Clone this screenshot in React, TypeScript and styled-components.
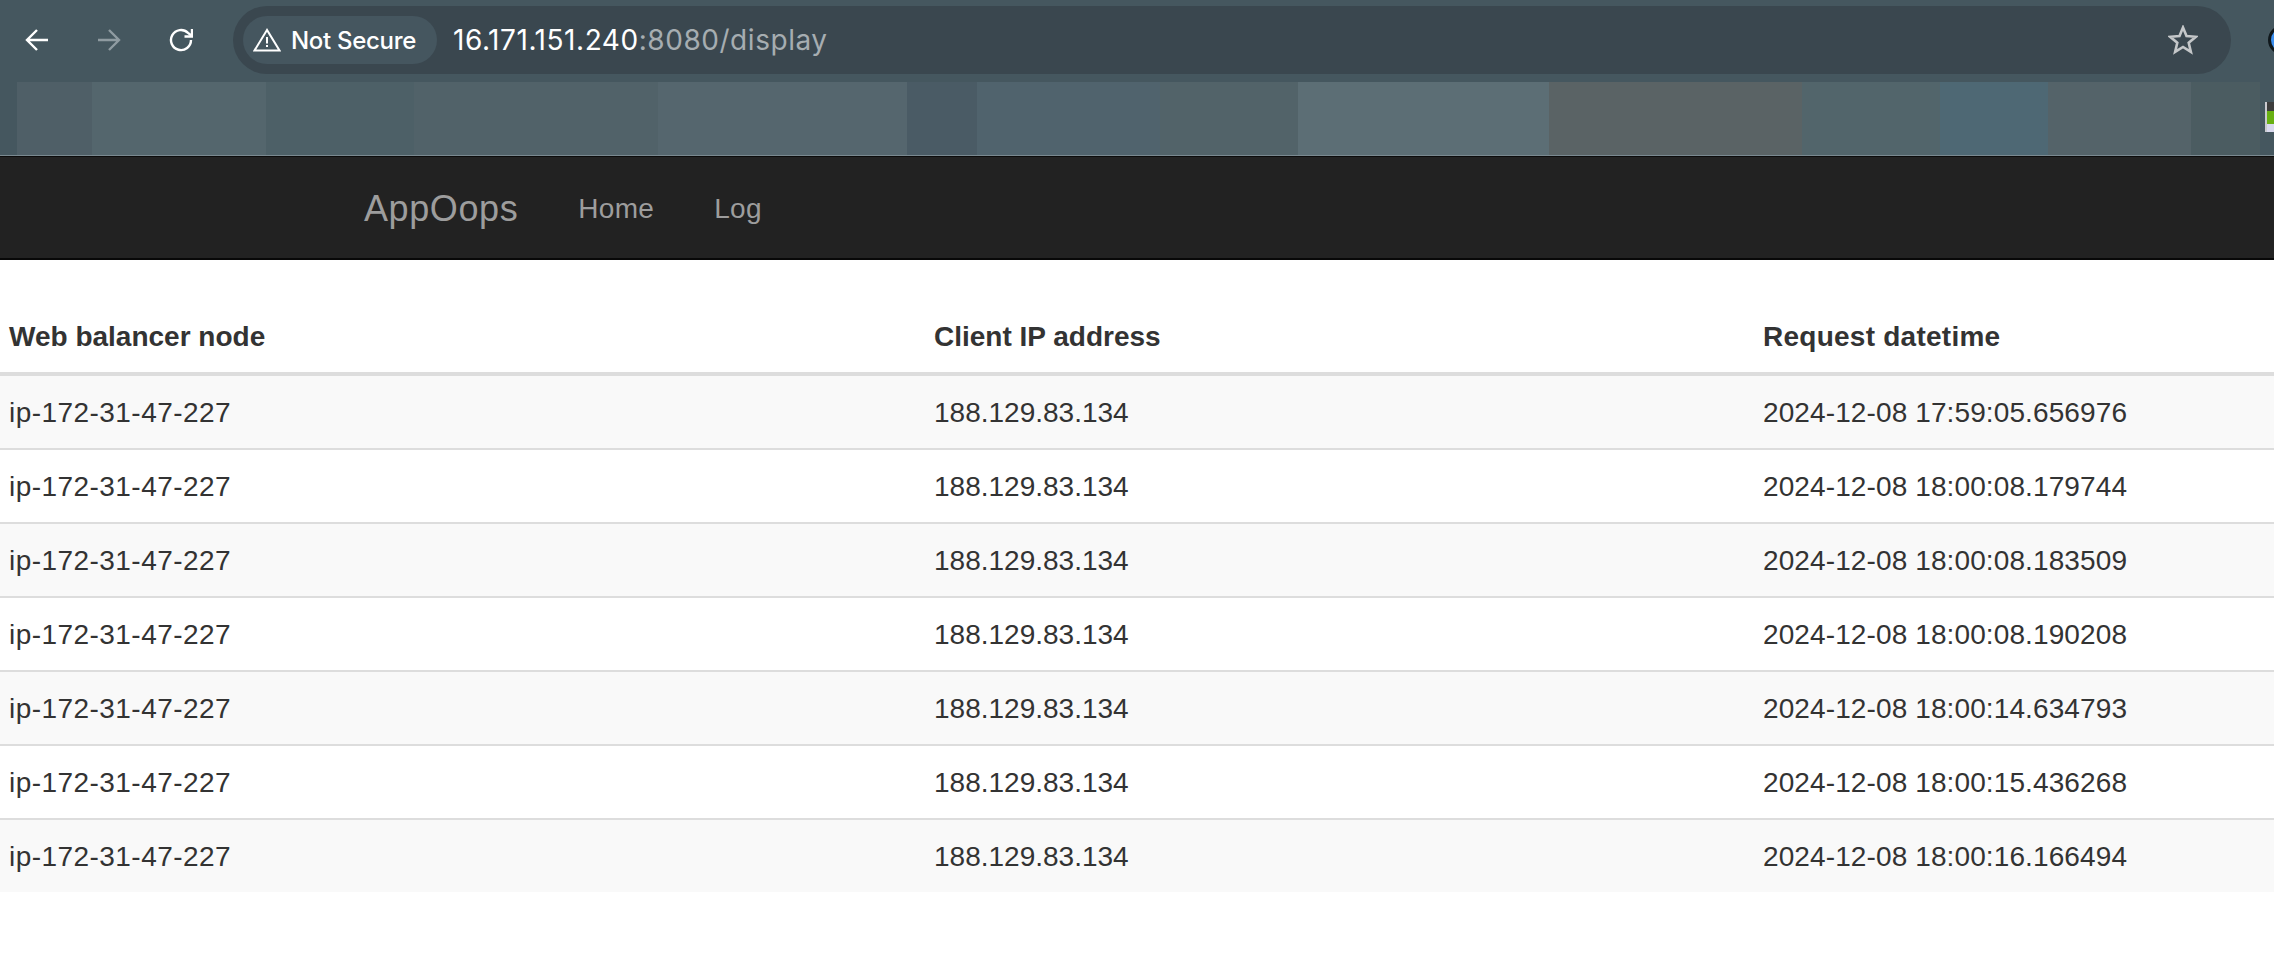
import React from "react";
import styled, { createGlobalStyle } from "styled-components";

const GlobalStyle = createGlobalStyle`
  html, body {
    margin: 0;
    padding: 0;
    background: #fff;
    overflow: hidden;
  }
  body {
    width: 2274px;
    height: 970px;
    font-family: "Liberation Sans", Arial, sans-serif;
  }
`;

// blurred-out bookmarks: width + colour of each block
const bookmarkBlocks = [
  { w: 75, c: "#4f5f67" },
  { w: 174, c: "#54666d" },
  { w: 148, c: "#4d6067" },
  { w: 244, c: "#516269" },
  { w: 249, c: "#55666e" },
  { w: 70, c: "#4a5b65" },
  { w: 183, c: "#50636d" },
  { w: 138, c: "#526369" },
  { w: 251, c: "#5c6e75" },
  { w: 253, c: "#5a6365" },
  { w: 138, c: "#52656b" },
  { w: 108, c: "#4e6874" },
  { w: 143, c: "#546369" },
  { w: 69, c: "#4b5c61" },
];

const rows = [
  "2024-12-08 17:59:05.656976",
  "2024-12-08 18:00:08.179744",
  "2024-12-08 18:00:08.183509",
  "2024-12-08 18:00:08.190208",
  "2024-12-08 18:00:14.634793",
  "2024-12-08 18:00:15.436268",
  "2024-12-08 18:00:16.166494",
];

const App: React.FC = () => {
  return (
    <Page>
      <GlobalStyle />
      <Chrome>
        <Toolbar>
          <NavIcon viewBox="0 0 24 24">
            <path d="M23 12H2M12 2L2 12l10 10" />
          </NavIcon>
          <NavIcon viewBox="0 0 24 24" $dim>
            <path d="M1 12h21M12 2l10 10-10 10" />
          </NavIcon>
          <NavIcon viewBox="0 0 24 24">
            <path d="M22 12a10 10 0 1 1-3-7.1L23 8" />
            <path d="M23 1v7.5h-7.5" />
          </NavIcon>
          <Omnibox>
            <SecurityPill>
              <WarnIcon viewBox="0 0 28 24">
                <path d="M14 2L1.5 22.5h25z" fill="none" stroke="#fff" strokeWidth="2" strokeLinejoin="miter" />
                <path d="M13 9h2v6.5h-2zM13 17h2v2h-2z" fill="#fff" />
              </WarnIcon>
              Not Secure
            </SecurityPill>
            <Url>
              16.171.151.240<UrlRest>:8080/display</UrlRest>
            </Url>
            <StarIcon viewBox="0 0 30 30">
              <path d="M15 2.5l3.5 8.6 9.3.7-7.1 6 2.2 9.1-7.9-4.9-7.9 4.9 2.2-9.1-7.1-6 9.3-.7z" />
            </StarIcon>
          </Omnibox>
          <Avatar />
        </Toolbar>
        <BookmarkBar>
          {bookmarkBlocks.map((b, i) => (
            <BookmarkBlock key={i} $w={b.w} $c={b.c} />
          ))}
          <Favicon />
        </BookmarkBar>
      </Chrome>
      <Navbar>
        <Brand>AppOops</Brand>
        <NavLink>Home</NavLink>
        <NavLink>Log</NavLink>
      </Navbar>
      <Table>
        <colgroup>
          <col style={{ width: 925 }} />
          <col style={{ width: 829 }} />
          <col />
        </colgroup>
        <thead>
          <tr>
            <Th>Web balancer node</Th>
            <Th>Client IP address</Th>
            <Th $track={0.25}>Request datetime</Th>
          </tr>
        </thead>
        <tbody>
          {rows.map((time) => (
            <Row key={time}>
              <Td $track={0.45}>ip-172-31-47-227</Td>
              <Td>188.129.83.134</Td>
              <Td $track={0.11}>{time}</Td>
            </Row>
          ))}
        </tbody>
      </Table>
    </Page>
  );
};

const Page = styled.div`
  width: 2274px;
  height: 970px;
  overflow: hidden;
  background: #fff;
`;

const Chrome = styled.div`
  background: #45575f;
  height: 156px;
  box-sizing: border-box;
  border-bottom: 1px solid #7a8990;
`;

const Toolbar = styled.div`
  height: 82px;
  display: flex;
  align-items: center;
  padding-left: 25px;
  box-sizing: border-box;
  white-space: nowrap;
`;

const NavIcon = styled.svg<{ $dim?: boolean }>`
  width: 24px;
  height: 24px;
  flex: none;
  margin-right: 48px;
  margin-top: -2px;
  fill: none;
  stroke: ${(p) => (p.$dim ? "#8f9ba1" : "#ffffff")};
  stroke-width: 2.4;
`;

const Omnibox = styled.div`
  flex: none;
  width: 1998px;
  height: 68px;
  margin-left: -8px;
  margin-top: -2px;
  border-radius: 34px;
  background: #3a474f;
  display: flex;
  align-items: center;
  padding-left: 10px;
  box-sizing: border-box;
`;

const SecurityPill = styled.div`
  height: 48px;
  width: 194px;
  flex: none;
  box-sizing: border-box;
  border-radius: 24px;
  background: #45565f;
  display: flex;
  align-items: center;
  padding-left: 10px;
  color: #fff;
  font-family: Inter, "Liberation Sans", sans-serif;
  font-size: 24px;
  font-weight: 500;
  letter-spacing: -0.3px;
`;

const WarnIcon = styled.svg`
  width: 28px;
  height: 24px;
  margin-right: 10px;
  flex: none;
`;

const Url = styled.div`
  margin-left: 16px;
  color: #fff;
  font-family: Inter, "Liberation Sans", sans-serif;
  font-size: 28px;
  letter-spacing: 0.55px;
  flex: 1;
`;

const UrlRest = styled.span`
  color: #a6adb1;
`;

const StarIcon = styled.svg`
  width: 30px;
  height: 30px;
  flex: none;
  margin-right: 33px;
  fill: none;
  stroke: #c4c7c9;
  stroke-width: 2.6;
`;

const Avatar = styled.div`
  flex: none;
  width: 30px;
  height: 30px;
  margin-left: 37px;
  margin-top: -2px;
  box-sizing: border-box;
  border-radius: 50%;
  border: 3px solid #10181c;
  background: #3b8ff0;
`;

const BookmarkBar = styled.div`
  height: 73px;
  padding-left: 17px;
  display: flex;
  align-items: center;
`;

const BookmarkBlock = styled.div<{ $w: number; $c: string }>`
  width: ${(p) => p.$w}px;
  height: 73px;
  flex: none;
  background: ${(p) => p.$c};
`;

const Favicon = styled.div`
  flex: none;
  width: 10px;
  height: 30px;
  margin-left: 5px;
  margin-top: -4px;
  border-left: 2px solid #c9c9cf;
  background: linear-gradient(#3d3d3d 0 30%, #68b012 30% 75%, #d9d9ee 75%);
`;

const Navbar = styled.div`
  height: 104px;
  box-sizing: border-box;
  background: #222;
  border-top: 1px solid #0c0c0c;
  border-bottom: 2px solid #080808;
  display: flex;
  align-items: center;
  padding-left: 364px;
  padding-top: 3px;
`;

const Brand = styled.div`
  color: #9d9d9d;
  font-size: 36px;
  letter-spacing: 0.6px;
  margin-right: 60px;
`;

const NavLink = styled.div`
  color: #9d9d9d;
  font-size: 28px;
  letter-spacing: 0.3px;
  margin-right: 60px;
`;

const Table = styled.table`
  margin-top: 40px;
  width: 2274px;
  table-layout: fixed;
  border-spacing: 0;
  color: #333;
  font-size: 28px;
  line-height: 40px;
`;

const Th = styled.th<{ $track?: number }>`
  padding: 17px 9px 15px;
  text-align: left;
  font-weight: bold;
  letter-spacing: ${(p) => p.$track ?? 0}px;
  border-bottom: 4px solid #ddd;
`;

const Td = styled.td<{ $track?: number }>`
  padding: 17px 9px 15px;
  letter-spacing: ${(p) => p.$track ?? 0}px;
`;

const Row = styled.tr`
  &:nth-child(odd) {
    background: #f9f9f9;
  }
  & + & td {
    border-top: 2px solid #ddd;
  }
`;

export default App;
